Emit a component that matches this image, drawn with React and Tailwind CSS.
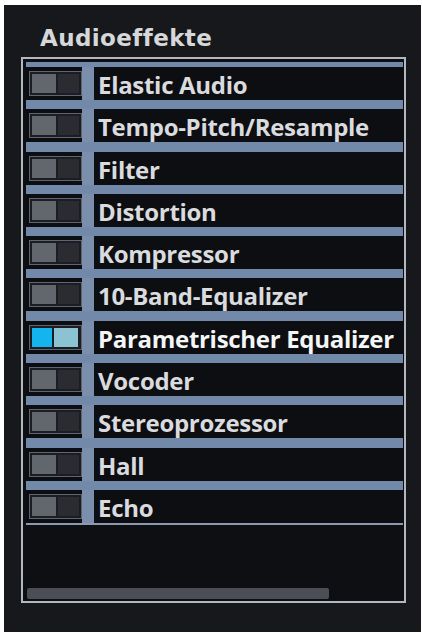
const effects = [
  { name: "Elastic Audio" },
  { name: "Tempo-Pitch/Resample" },
  { name: "Filter" },
  { name: "Distortion" },
  { name: "Kompressor" },
  { name: "10-Band-Equalizer" },
  { name: "Parametrischer Equalizer", on: true },
  { name: "Vocoder" },
  { name: "Stereoprozessor" },
  { name: "Hall" },
  { name: "Echo" },
];

function Toggle({ on }) {
  return (
    <div className="ml-[3px] flex h-[25px] w-[53px] items-center gap-[2px] border border-[#5d6472] bg-[#1b1d22] px-[2px]">
      <div className={on ? "h-[19px] w-[20px] bg-[#14b4ef]" : "h-[19px] w-[25px] bg-[#62666d]"} />
      <div className={on ? "h-[19px] w-[24px] bg-[#8cc3d3]" : "h-[19px] w-[21px] bg-[#2a2c31]"} />
    </div>
  );
}

function EffectRow({ name, on }) {
  return (
    <div className="flex h-[33px] items-center bg-[#0d0e11]">
      <Toggle on={on} />
      <div className="h-full w-[12px] bg-[#7b8fac]" />
      <span
        className={
          "whitespace-nowrap pl-[4px] pt-[3px] text-[24px] font-bold leading-none tracking-[-0.3px] " +
          (on ? "text-[#f4f5f7]" : "text-[#d9dbdf]")
        }
      >
        {name}
      </span>
    </div>
  );
}

export default function App() {
  return (
    <div
      className="h-[634px] w-[423px] bg-white pt-[5px] pl-[4px] pr-[2px] pb-[2px]"
      style={{ fontFamily: "'Open Sans', 'Liberation Sans', sans-serif" }}
    >
      <div className="flex h-full flex-col bg-[#17181b]">
        {/* TITLE */}
        <div
          className="ml-[36px] mt-[22px] h-[30px] text-[23px] font-bold leading-none tracking-[0.4px] text-[#d6d7d9]"
          style={{ fontFamily: "'DejaVu Sans', Verdana, sans-serif" }}
        >
          Audioeffekte
        </div>

        {/* LIST */}
        <div className="ml-[17px] flex h-[546px] w-[385px] flex-col border-2 border-[#b3b7be] bg-[#0e0f12]">
          <div className="ml-[3px] mr-[1px] mt-[3px] flex flex-col">
            <div className="h-[5px] bg-[#7389aa]" />
            {effects.map((e, i) => (
              <div key={e.name} className="flex flex-col">
                <EffectRow name={e.name} on={e.on} />
                {i < effects.length - 1 ? (
                  <div className="h-[9.3px] bg-[#7389aa]" />
                ) : (
                  <div className="h-[2px] bg-[#8b9ab0]" />
                )}
              </div>
            ))}
          </div>

          {/* SCROLLBAR */}
          <div className="mt-auto mb-[2px] ml-[4px] h-[11px] w-[302px] rounded-[2px] bg-[#4b4e54]" />
        </div>
      </div>
    </div>
  );
}
